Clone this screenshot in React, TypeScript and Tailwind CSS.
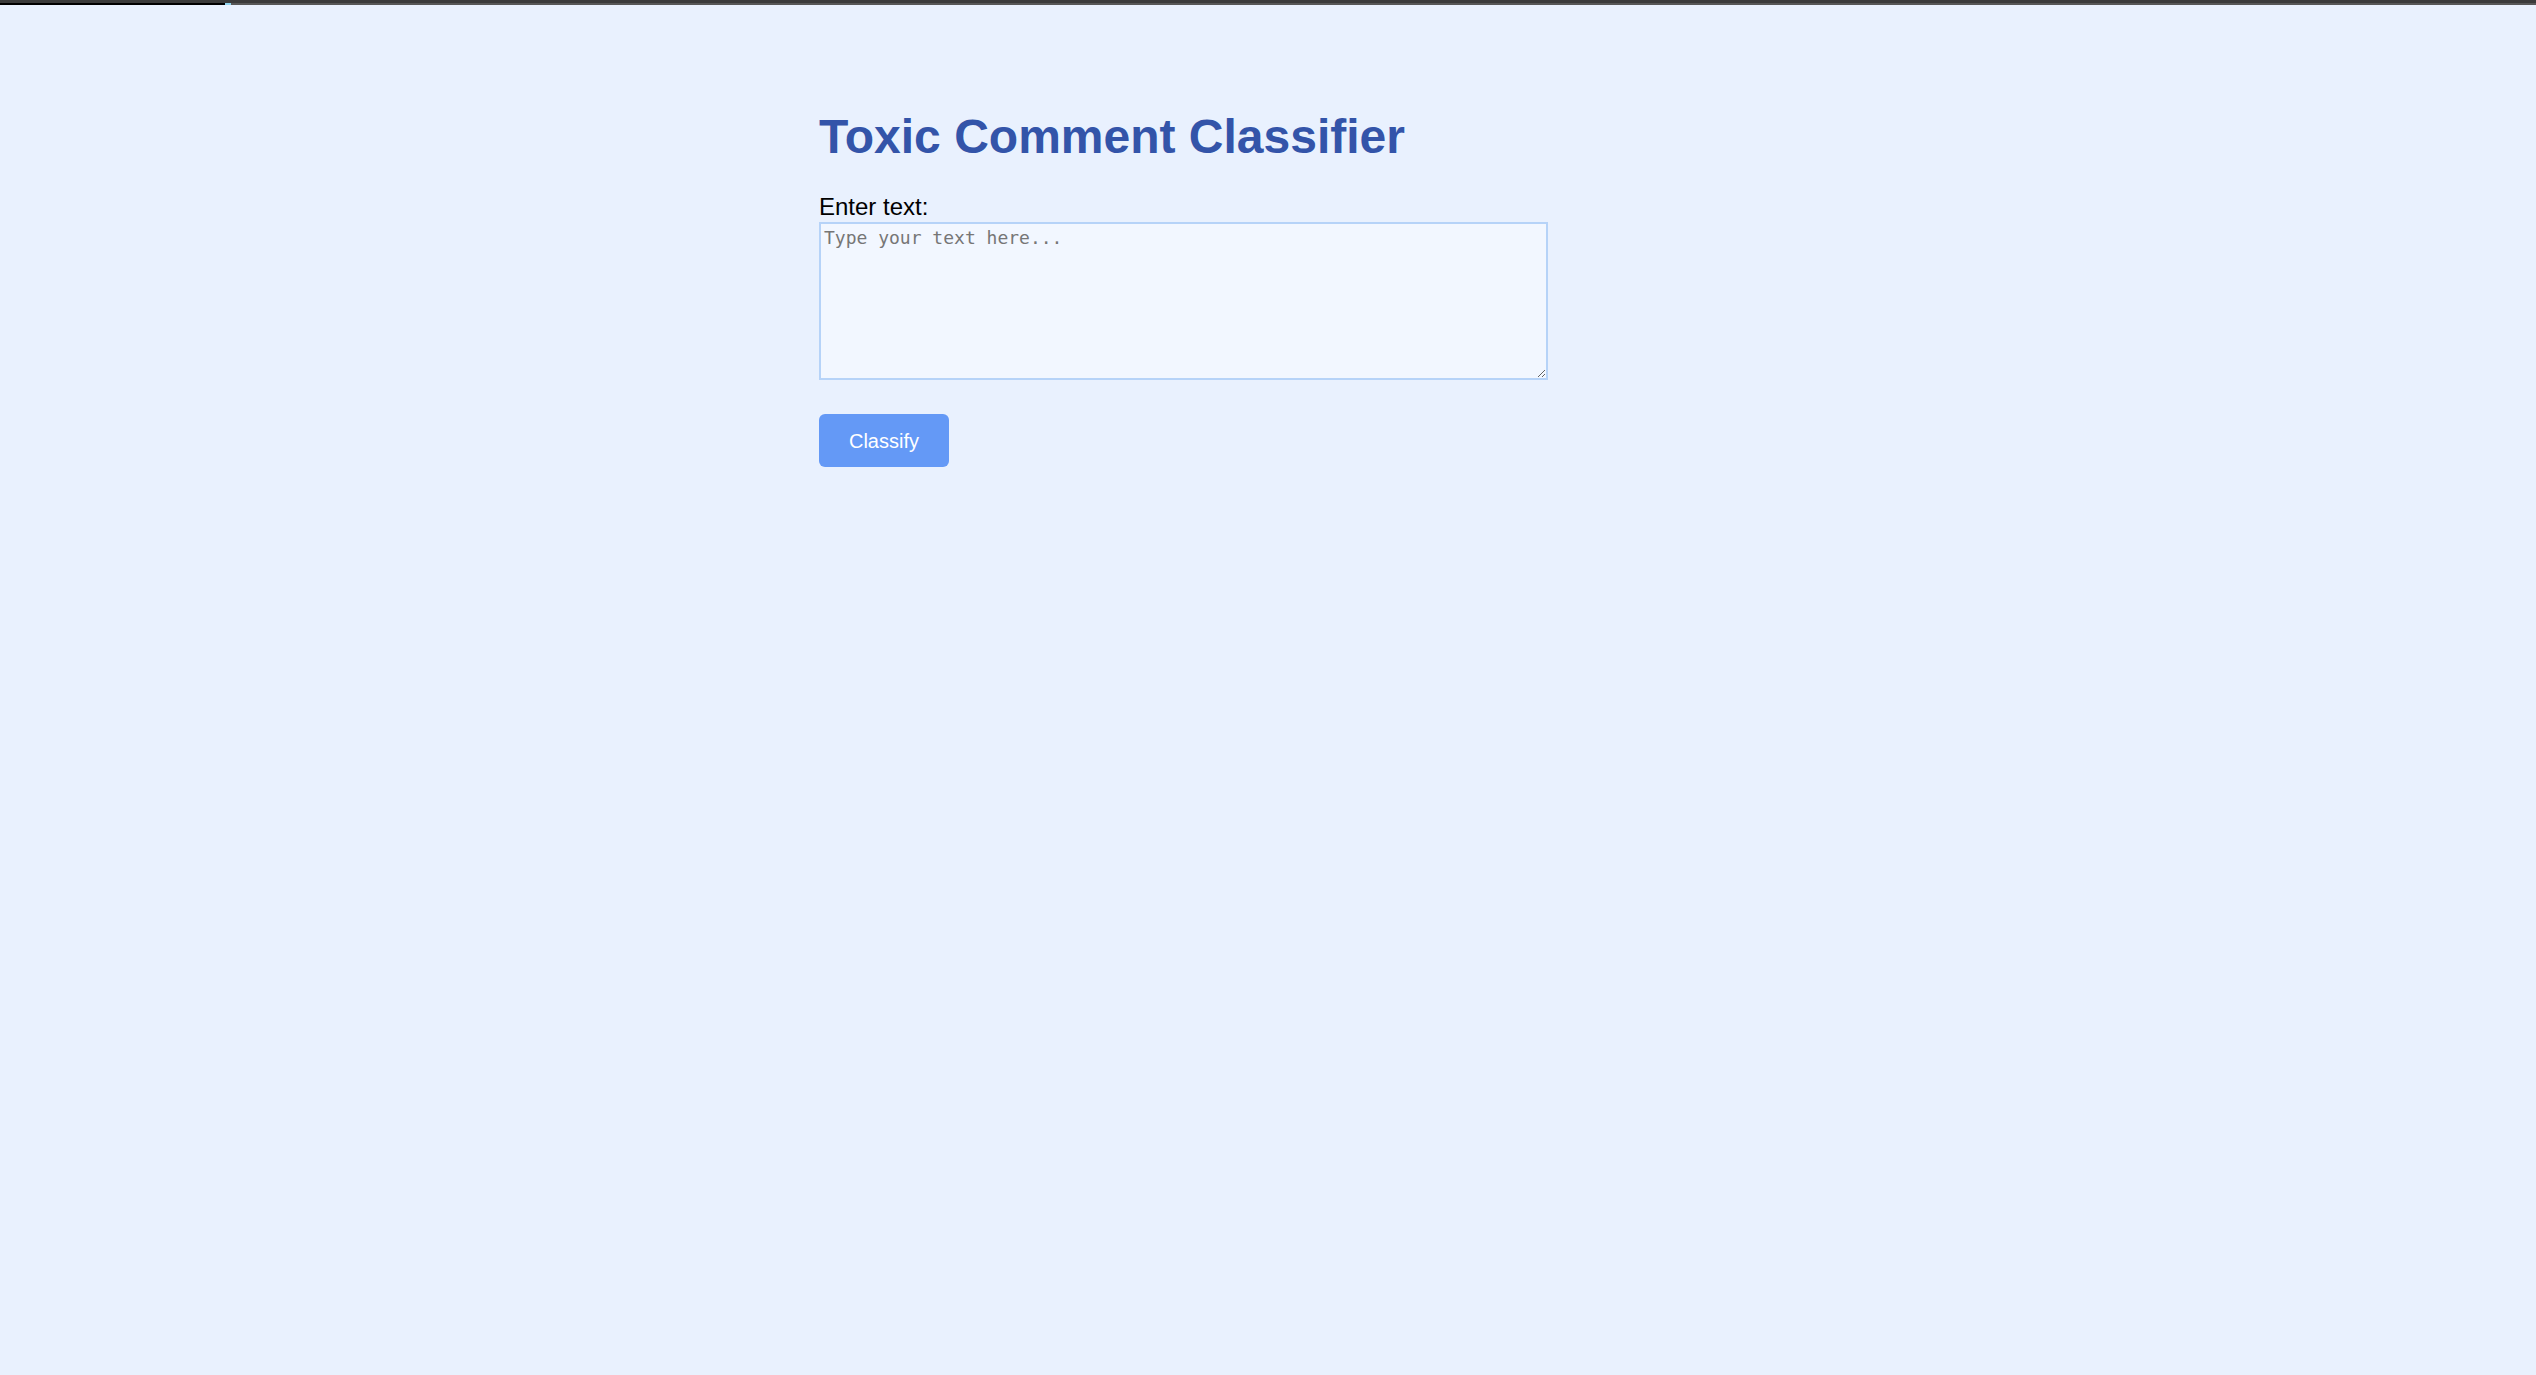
import React, { useState } from 'react';

const App: React.FC = () => {
  const [text, setText] = useState('');

  const handleClassify = (e: React.FormEvent) => {
    e.preventDefault();
  };

  return (
    <div className="min-h-screen bg-[#e9f1fe] font-['Liberation_Sans',Arial,sans-serif]">
      {/* browser loading strip along the top */}
      <div className="h-[3px] bg-[#3b3b3b]" />
      <div className="flex h-[2px]">
        <div className="w-[225px] bg-black" />
        <div className="w-[6px] bg-[#8fd3ee]" />
        <div className="flex-1 bg-[#575757]" />
      </div>

      <form onSubmit={handleClassify} className="mx-auto w-[898px] pt-[104px]">
        <h1 className="text-[48px] leading-[56px] font-bold text-[#3354a9]">Toxic Comment Classifier</h1>

        <label htmlFor="comment" className="block mt-[28px] text-[24px] leading-[28px] text-black">
          Enter text:
        </label>
        <textarea
          id="comment"
          value={text}
          onChange={(e) => setText(e.target.value)}
          placeholder="Type your text here..."
          className="block mt-[1px] w-[729px] h-[158px] px-[3px] pt-[2px] pb-[3px] bg-[#f2f7ff] border-2 border-[#b6d3f8] font-['DejaVu_Sans_Mono',monospace] text-[18px] leading-[24px] text-black placeholder:text-[#767676] focus:outline-none"
        />

        <button
          type="submit"
          className="mt-[34px] w-[130px] h-[53px] rounded-[6px] bg-[#6499f6] text-white text-[20px] flex items-center justify-center"
        >
          Classify
        </button>
      </form>
    </div>
  );
};

export default App;
